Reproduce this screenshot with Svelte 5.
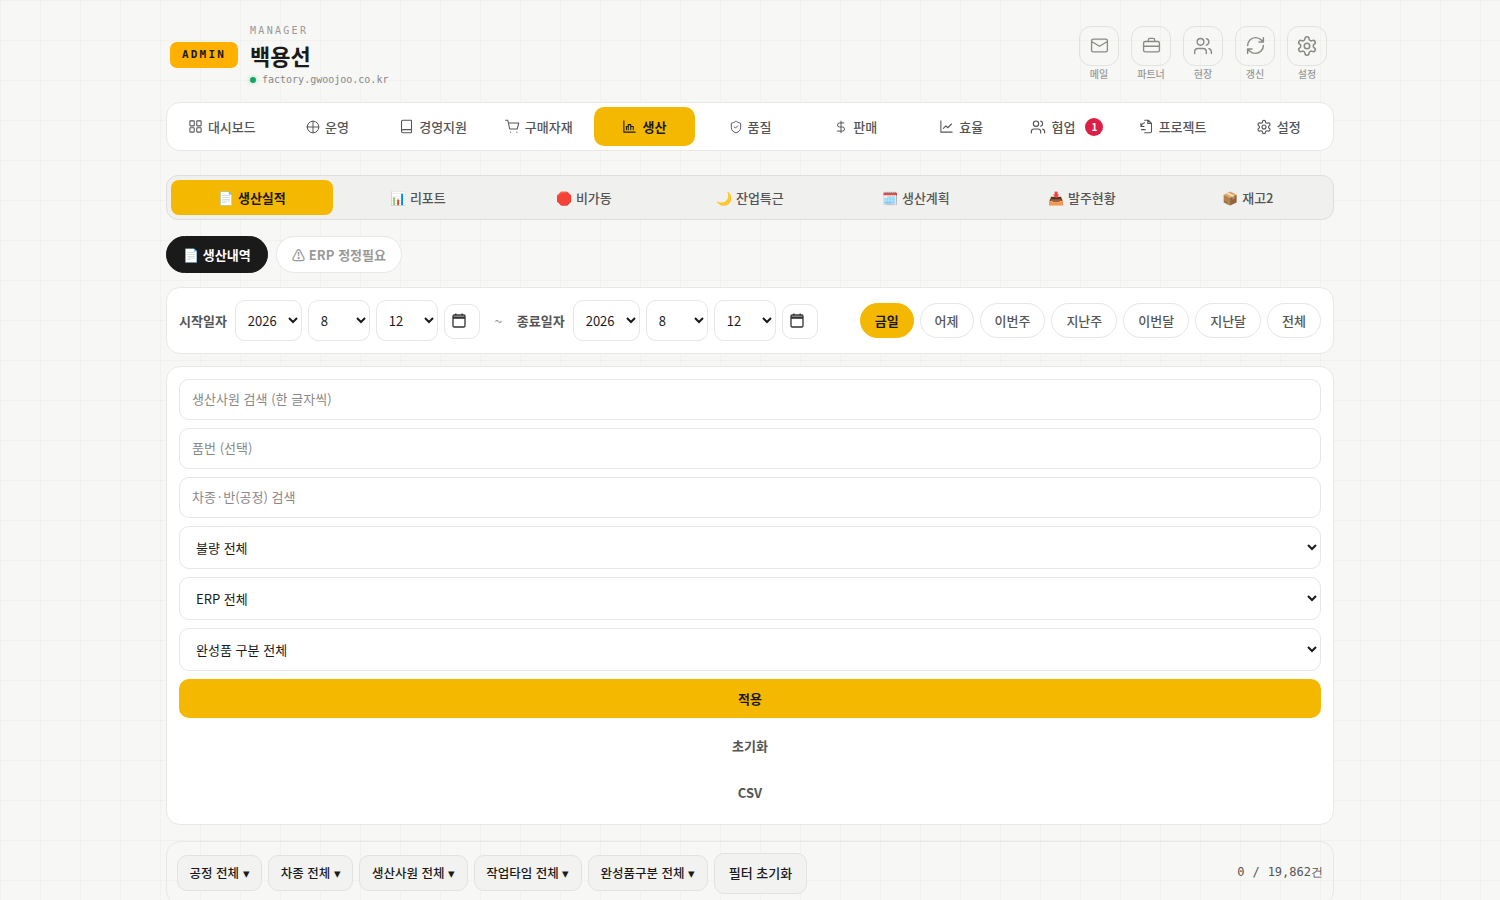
<script lang="ts">
  const p = {
    mail: "M4 4h16a2 2 0 0 1 2 2v12a2 2 0 0 1-2 2H4a2 2 0 0 1-2-2V6a2 2 0 0 1 2-2z M22 7l-10 6L2 7",
    briefcase: "M4 7h16a2 2 0 0 1 2 2v9a2 2 0 0 1-2 2H4a2 2 0 0 1-2-2V9a2 2 0 0 1 2-2z M16 7V5a2 2 0 0 0-2-2h-4a2 2 0 0 0-2 2v2 M2 13h20",
    users: "M16 21v-2a4 4 0 0 0-4-4H6a4 4 0 0 0-4 4v2 M5 7a4 4 0 1 0 8 0a4 4 0 1 0-8 0 M22 21v-2a4 4 0 0 0-3-3.87 M16 3.13a4 4 0 0 1 0 7.75",
    refresh: "M3 12a9 9 0 0 1 9-9 9.75 9.75 0 0 1 6.74 2.74L21 8 M21 3v5h-5 M21 12a9 9 0 0 1-9 9 9.75 9.75 0 0 1-6.74-2.74L3 16 M8 16H3v5",
    gear: "M12.22 2h-.44a2 2 0 0 0-2 2v.18a2 2 0 0 1-1 1.73l-.43.25a2 2 0 0 1-2 0l-.15-.08a2 2 0 0 0-2.73.73l-.22.38a2 2 0 0 0 .73 2.73l.15.1a2 2 0 0 1 1 1.72v.51a2 2 0 0 1-1 1.74l-.15.09a2 2 0 0 0-.73 2.73l.22.38a2 2 0 0 0 2.73.73l.15-.08a2 2 0 0 1 2 0l.43.25a2 2 0 0 1 1 1.73V20a2 2 0 0 0 2 2h.44a2 2 0 0 0 2-2v-.18a2 2 0 0 1 1-1.73l.43-.25a2 2 0 0 1 2 0l.15.08a2 2 0 0 0 2.73-.73l.22-.39a2 2 0 0 0-.73-2.73l-.15-.08a2 2 0 0 1-1-1.74v-.5a2 2 0 0 1 1-1.74l.15-.09a2 2 0 0 0 .73-2.73l-.22-.38a2 2 0 0 0-2.73-.73l-.15.08a2 2 0 0 1-2 0l-.43-.25a2 2 0 0 1-1-1.73V4a2 2 0 0 0-2-2z M9 12a3 3 0 1 0 6 0a3 3 0 1 0-6 0",
    grid: "M4 3h5a1 1 0 0 1 1 1v6a1 1 0 0 1-1 1H4a1 1 0 0 1-1-1V4a1 1 0 0 1 1-1z M15 3h5a1 1 0 0 1 1 1v6a1 1 0 0 1-1 1h-5a1 1 0 0 1-1-1V4a1 1 0 0 1 1-1z M4 14h5a1 1 0 0 1 1 1v5a1 1 0 0 1-1 1H4a1 1 0 0 1-1-1v-5a1 1 0 0 1 1-1z M15 14h5a1 1 0 0 1 1 1v5a1 1 0 0 1-1 1h-5a1 1 0 0 1-1-1v-5a1 1 0 0 1 1-1z",
    cross: "M2 12a10 10 0 1 0 20 0a10 10 0 1 0-20 0 M12 2v20 M2 12h20",
    book: "M6 2h13a1 1 0 0 1 1 1v18a1 1 0 0 1-1 1H6.5A2.5 2.5 0 0 1 4 19.5v-15A2.5 2.5 0 0 1 6.5 2 M4 19.5A2.5 2.5 0 0 1 6.5 17H20",
    cart: "M1 2h3.5l3 14h12l2.5-9.5H5.5 M9 21h.01 M19 21h.01",
    bars: "M3 3v18h18 M7 17v-5h3v5 M10 17V9h4v8 M14 17v-5h4v5",
    shield: "M20 13c0 5-3.5 7.5-7.66 8.95a1 1 0 0 1-.67-.01C7.5 20.5 4 18 4 13V6a1 1 0 0 1 1-1c2 0 4.5-1.2 6.24-2.72a1.17 1.17 0 0 1 1.52 0C14.51 3.81 17 5 19 5a1 1 0 0 1 1 1z M9 12l2 2 4-4",
    dollar: "M12 2v20 M17 5H9.5a3.5 3.5 0 0 0 0 7h5a3.5 3.5 0 0 1 0 7H6",
    chart: "M3 3v18h18 M7 15l4-4 3 3 6-6",
    project: "M9 2h6l5 5v13a2 2 0 0 1-2 2H9 M14 2v5h5 M9 6a6 6 0 0 0-5 5 M3 7v5h5 M4 17h6"
  };

  const topIcons = [
    { icon: p.mail, label: "메일", size: 19 },
    { icon: p.briefcase, label: "파트너", size: 19 },
    { icon: p.users, label: "현장", size: 20 },
    { icon: p.refresh, label: "갱신", size: 21 },
    { icon: p.gear, label: "설정", size: 22 }
  ];

  const navItems = [
    { icon: p.grid, label: "대시보드", size: 15 },
    { icon: p.cross, label: "운영", size: 14 },
    { icon: p.book, label: "경영지원", size: 15 },
    { icon: p.cart, label: "구매자재", size: 15 },
    { icon: p.bars, label: "생산", size: 15, active: true },
    { icon: p.shield, label: "품질", size: 14 },
    { icon: p.dollar, label: "판매", size: 14 },
    { icon: p.chart, label: "효율", size: 15 },
    { icon: p.users, label: "협업", size: 16, badge: 1 },
    { icon: p.project, label: "프로젝트", size: 15 },
    { icon: p.gear, label: "설정", size: 16 }
  ];

  const subTabs = ["📄 생산실적", "📊 리포트", "🛑 비가동", "🌙 잔업특근", "🗓️ 생산계획", "📥 발주현황", "📦 재고2"];
  const presets = ["금일", "어제", "이번주", "지난주", "이번달", "지난달", "전체"];
  const searches = ["생산사원 검색 (한 글자씩)", "품번 (선택)", "차종·반(공정) 검색"];
  const wideSelects = ["불량 전체", "ERP 전체", "완성품 구분 전체"];
  const columnFilters = ["공정 전체 ▾", "차종 전체 ▾", "생산사원 전체 ▾", "작업타임 전체 ▾", "완성품구분 전체 ▾"];
  const dateGroups = [
    { label: "시작일자" },
    { label: "종료일자" }
  ];
</script>

{#snippet icon(d: string, size: number)}
  <svg width={size} height={size} viewBox="0 0 24 24" fill="none" stroke="currentColor" stroke-width="1.7" stroke-linecap="round" stroke-linejoin="round">
    <path {d} />
  </svg>
{/snippet}

<div class="page">
  <header class="head">
    <span class="role">ADMIN</span>
    <div class="who">
      <div class="who-sub">MANAGER</div>
      <div class="who-name">백용선</div>
      <div class="who-host"><i class="dot"></i>factory.gwoojoo.co.kr</div>
    </div>
    <div class="top-icons">
      {#each topIcons as t}
        <div class="top-icon">
          <button class="top-btn">{@render icon(t.icon, t.size)}</button>
          <span>{t.label}</span>
        </div>
      {/each}
    </div>
  </header>

  <nav class="nav">
    {#each navItems as n}
      <button class="nav-item" class:active={n.active}>
        {@render icon(n.icon, n.size)}
        <span>{n.label}</span>
        {#if n.badge}<b class="badge">{n.badge}</b>{/if}
      </button>
    {/each}
  </nav>

  <div class="subtabs">
    {#each subTabs as s, i}
      <button class="subtab" class:active={i === 0}>{s}</button>
    {/each}
  </div>

  <div class="pills">
    <button class="pill on">📄 생산내역</button>
    <button class="pill">⚠ ERP 정정필요</button>
  </div>

  <section class="card dates">
    {#each dateGroups as g, i}
      {#if i === 1}<span class="tilde">~</span>{/if}
      <span class="date-label">{g.label}</span>
      <select class="sel year"><option>2026</option></select>
      <select class="sel"><option>8</option></select>
      <select class="sel"><option>12</option></select>
      <button class="cal" aria-label="달력">
        <svg width="14" height="15" viewBox="0 0 14 15" fill="none" stroke="#333" stroke-width="1.3">
          <rect x="1" y="2" width="12" height="12" rx="1.2" />
          <path d="M1 4.6h12" stroke-width="2.4" />
          <path d="M3.8 0.4v2.2M10.2 0.4v2.2" />
        </svg>
      </button>
    {/each}
    <div class="presets">
      {#each presets as r, i}
        <button class="preset" class:active={i === 0}>{r}</button>
      {/each}
    </div>
  </section>

  <section class="card filters">
    {#each searches as s}
      <input class="field" placeholder={s} />
    {/each}
    {#each wideSelects as w}
      <select class="field wide"><option>{w}</option></select>
    {/each}
    <button class="action apply">적용</button>
    <button class="action">초기화</button>
    <button class="action">CSV</button>
  </section>

  <section class="toolbar">
    {#each columnFilters as c}
      <button class="col-filter">{c}</button>
    {/each}
    <button class="col-filter reset">필터 초기화</button>
    <span class="count">0 / 19,862건</span>
  </section>
</div>

<style>
  :global(html), :global(body) {
    height: 100%;
    overflow: hidden;
  }
  :global(body) {
    background-color: #f7f7f5;
    background-image:
      linear-gradient(rgba(0, 0, 0, 0.025) 1px, transparent 1px),
      linear-gradient(90deg, rgba(0, 0, 0, 0.025) 1px, transparent 1px);
    background-size: 40px 40px;
    font-family: "Noto Sans CJK KR", "Noto Sans", sans-serif;
    word-spacing: 0.8px;
    color: #1a1a1a;
  }
  button, input, select {
    font-family: inherit;
    word-spacing: inherit;
  }
  .page {
    width: 1168px;
    margin: 0 auto;
    padding-top: 20px;
  }
  .head {
    display: flex;
    align-items: center;
    height: 70px;
    padding-left: 4px;
    margin-bottom: 12px;
  }
  .role {
    width: 68px;
    height: 26px;
    line-height: 26px;
    text-align: center;
    background: #ffb000;
    border-radius: 7px;
    font: 700 11px/26px "DejaVu Sans Mono", monospace;
    letter-spacing: 2.2px;
    color: #1a1a1a;
    margin-right: 12px;
  }
  .who-sub {
    font: 400 10px/14px "DejaVu Sans Mono", monospace;
    letter-spacing: 2.3px;
    color: #999;
  }
  .who-name {
    font-size: 22px;
    font-weight: 700;
    line-height: 32px;
    margin-top: 1px;
  }
  .who-host {
    display: flex;
    align-items: center;
    gap: 6px;
    font: 400 10px/14px "DejaVu Sans Mono", monospace;
    color: #888;
    margin-top: 2px;
  }
  .dot {
    width: 6px;
    height: 6px;
    border-radius: 50%;
    background: #10a860;
    box-shadow: 0 0 4px rgba(16, 168, 96, 0.4);
  }
  .top-icons {
    margin-left: auto;
    display: flex;
    gap: 12px;
    padding-right: 7px;
    margin-top: -4px;
  }
  .top-icon {
    width: 40px;
    display: flex;
    flex-direction: column;
    align-items: center;
    gap: 1px;
  }
  .top-icon span {
    font-size: 10px;
    font-weight: 500;
    line-height: 14px;
    color: #999;
    white-space: nowrap;
  }
  .top-btn {
    width: 40px;
    height: 40px;
    display: flex;
    align-items: center;
    justify-content: center;
    background: transparent;
    border: 1px solid #e2e2de;
    border-radius: 12px;
    color: #8a8a86;
    padding: 0;
  }
  .nav {
    display: flex;
    gap: 4px;
    padding: 4px;
    height: 49px;
    box-sizing: border-box;
    background: #fff;
    border: 1px solid #e8e8e6;
    border-radius: 14px;
    margin-bottom: 24px;
  }
  .nav-item {
    flex: 1 1 0;
    min-width: 0;
    display: flex;
    align-items: center;
    justify-content: center;
    gap: 5px;
    background: none;
    border: 0;
    border-radius: 10px;
    font-size: 13px;
    font-weight: 500;
    color: #555;
    padding: 0;
  }
  .nav-item svg {
    flex: none;
  }
  .nav-item.active {
    background: #f5b800;
    color: #1a1a1a;
    font-weight: 700;
  }
  .badge {
    width: 18px;
    height: 18px;
    margin-left: 5px;
    border-radius: 50%;
    background: #dc1f45;
    color: #fff;
    font-size: 10px;
    line-height: 18px;
    text-align: center;
  }
  .subtabs {
    display: flex;
    gap: 4px;
    padding: 4px;
    height: 45px;
    box-sizing: border-box;
    background: #f0f0ee;
    border: 1px solid #dededb;
    border-radius: 12px;
    margin-bottom: 16px;
  }
  .subtab {
    flex: 1 1 0;
    background: none;
    border: 0;
    border-radius: 8px;
    font-size: 13px;
    font-weight: 500;
    color: #555;
    padding: 0 0 1px;
  }
  .subtab.active {
    background: #f5b800;
    color: #1a1a1a;
    font-weight: 700;
  }
  .pills {
    display: flex;
    gap: 8px;
    margin-bottom: 14px;
  }
  .pill {
    height: 37px;
    padding: 0 15.5px;
    background: #fff;
    border: 1px solid #e8e8e6;
    border-radius: 19px;
    font-size: 13px;
    font-weight: 700;
    color: #999;
  }
  .pill.on {
    background: #1a1a1a;
    border-color: #1a1a1a;
    color: #fff;
    padding: 0 16px;
  }
  .card {
    background: #fff;
    border: 1px solid #e8e8e6;
    border-radius: 14px;
    box-sizing: border-box;
  }
  .dates {
    height: 67px;
    padding: 0 12px;
    display: flex;
    align-items: center;
    gap: 6px;
    margin-bottom: 12px;
  }
  .date-label {
    font-size: 13px;
    font-weight: 700;
    color: #555;
    white-space: nowrap;
    margin-right: 2px;
  }
  .sel {
    width: 62px;
    height: 41px;
    padding: 0 0 0 8px;
    background: #fff;
    border: 1px solid #e6e6e4;
    border-radius: 10px;
    font-size: 13px;
    color: #1a1a1a;
  }
  .sel.year {
    width: 67px;
  }
  .cal {
    width: 36px;
    height: 35px;
    display: flex;
    align-items: center;
    justify-content: center;
    background: #fff;
    border: 1px solid #e6e6e4;
    border-radius: 10px;
    padding: 0 6px 1px 0;
    margin-top: 1px;
  }
  .tilde {
    width: 25px;
    text-align: center;
    font-size: 14px;
    color: #999;
  }
  .presets {
    margin-left: auto;
    display: flex;
    gap: 6px;
  }
  .preset {
    height: 35px;
    padding: 0 14px;
    background: #fff;
    border: 1px solid #e6e6e4;
    border-radius: 18px;
    font-size: 13px;
    font-weight: 500;
    color: #555;
    white-space: nowrap;
  }
  .preset.active {
    background: #f5b800;
    border-color: #f5b800;
    color: #1a1a1a;
    font-weight: 700;
  }
  .filters {
    display: flex;
    flex-direction: column;
    gap: 8px;
    padding: 12px;
    margin-bottom: 16px;
  }
  .field {
    width: 100%;
    height: 41px;
    box-sizing: border-box;
    padding: 0 12px 2px;
    background: #fff;
    border: 1px solid #e6e6e4;
    border-radius: 10px;
    font-size: 13px;
    color: #1a1a1a;
    outline: none;
  }
  .field::placeholder {
    color: #888;
  }
  .field.wide {
    height: 43px;
    padding-bottom: 0;
  }
  .action {
    height: 39px;
    padding-bottom: 2px;
    background: transparent;
    border: 0;
    border-radius: 10px;
    font-size: 13px;
    font-weight: 700;
    color: #555;
  }
  .action.apply {
    background: #f5b800;
    color: #1a1a1a;
  }
  .toolbar {
    display: flex;
    align-items: center;
    gap: 6px;
    height: 64px;
    padding: 0 10px;
    box-sizing: border-box;
    border: 1px solid #e8e8e6;
    border-radius: 14px;
  }
  .col-filter {
    height: 36px;
    padding: 0 11.5px 1px;
    background: #f2f2f0;
    border: 1px solid #e2e2df;
    border-radius: 10px;
    font-size: 12.5px;
    font-weight: 500;
    color: #1a1a1a;
    white-space: nowrap;
  }
  .col-filter.reset {
    height: 41px;
    padding: 0 14px 1px;
    font-size: 13px;
  }
  .count {
    margin-left: auto;
    padding-bottom: 1px;
    font: 400 12px "DejaVu Sans Mono", monospace;
    color: #555;
  }
</style>
